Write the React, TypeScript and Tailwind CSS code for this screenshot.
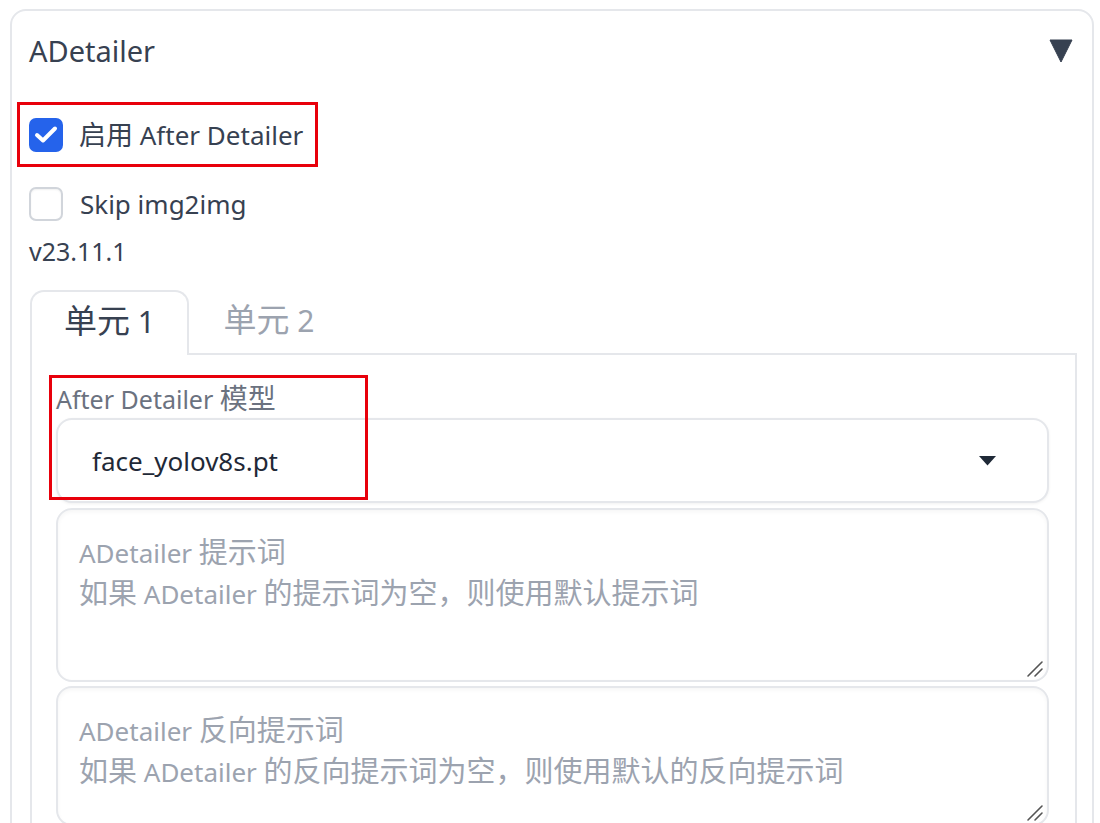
import React from "react";

const CJK_RE = /([\u3000-\u303f\u4e00-\u9fff\uff00-\uffef]+)/;

function Mixed({ text, cjk }: { text: string; cjk: string }) {
  const parts = text.split(CJK_RE);
  return (
    <>
      {parts.map((p, i) =>
        CJK_RE.test(p) ? (
          <span key={i} className={cjk}>
            {p}
          </span>
        ) : (
          <span key={i}>{p}</span>
        )
      )}
    </>
  );
}

function CheckedBox() {
  return (
    <div className="w-[34px] h-[34px] rounded-[7px] bg-[#2563eb] shrink-0">
      <svg width="34" height="34" viewBox="0 0 34 34">
        <path d="M8 17 L14 22.5 L26 10.5" fill="none" stroke="white" strokeWidth="4" strokeLinecap="round" strokeLinejoin="round" />
      </svg>
    </div>
  );
}

function EmptyBox() {
  return <div className="w-[34px] h-[34px] rounded-[7px] border-2 border-[#d1d5db] bg-white shadow-[inset_0_1px_2px_rgba(0,0,0,0.06)] shrink-0" />;
}

function Grip() {
  return (
    <svg className="absolute right-[3px] bottom-[2px]" width="18" height="18" viewBox="0 0 18 18">
      <path d="M2 16 L16 2 M9 16 L16 9" stroke="#555" strokeWidth="1.6" strokeLinecap="round" />
    </svg>
  );
}

function PromptBox({ h, title, desc }: { h: string; title: string; desc: string }) {
  return (
    <div className={`relative ${h} rounded-[16px] border-2 border-[#e5e7eb] bg-white pl-[21px] pt-[22px] text-[26px] leading-[40px] text-[#9ca3af] shadow-[inset_0_2px_4px_rgba(0,0,0,0.04)]`}>
      <div className="whitespace-nowrap">
        <Mixed text={title} cjk="text-[29px]" />
      </div>
      <div className="whitespace-nowrap">
        <Mixed text={desc} cjk="text-[29px]" />
      </div>
      <Grip />
    </div>
  );
}

export default function App() {
  return (
    <div className="w-[1100px] h-[823px] overflow-hidden bg-white pt-[9px] pl-[10px] font-['Noto_Sans','Noto_Sans_CJK_SC',sans-serif] text-[#374151]">
      <div className="w-[1084px] h-[840px] border-2 border-[#e5e7eb] rounded-[16px] pl-[17px] pr-[15px]">
        {/* header */}
        <div className="h-[80px] flex items-center justify-between">
          <span className="text-[29px] leading-[36px]">ADetailer</span>
          <svg className="mr-[4px]" width="24" height="24" viewBox="0 0 24 24">
            <path d="M1 1 L23 1 L12 23 Z" fill="#374151" stroke="#374151" strokeWidth="1" strokeLinejoin="round" />
          </svg>
        </div>

        {/* enable */}
        <div className="relative mt-[19px] h-[50px] flex items-center gap-[16px]">
          <CheckedBox />
          <span className="text-[26px] leading-[36px] whitespace-nowrap">
            <Mixed text="启用 After Detailer" cjk="text-[27px]" />
          </span>
          <div className="absolute left-[-12px] top-[-8px] w-[301px] h-[65px] border-[3px] border-[#e8000b] pointer-events-none" />
        </div>

        {/* skip */}
        <div className="mt-[19px] h-[50px] flex items-center gap-[17px]">
          <EmptyBox />
          <span className="text-[26px] leading-[36px]">Skip img2img</span>
        </div>

        <div className="mt-[4px] h-[36px] text-[25px] leading-[36px]">v23.11.1</div>

        {/* tabs */}
        <div className="mt-[21px] ml-[1px] flex">
          <div className="relative z-10 w-[159px] h-[65px] border-2 border-b-0 border-[#e5e7eb] rounded-t-[14px] bg-white flex items-center justify-center pb-[4px]">
            <span className="text-[30px] leading-[40px] text-[#374151] whitespace-nowrap">
              <Mixed text="单元 1" cjk="text-[33px]" />
            </span>
          </div>
          <div className="w-[160px] h-[65px] flex items-center justify-center pb-[4px]">
            <span className="text-[30px] leading-[40px] text-[#9ca3af] whitespace-nowrap">
              <Mixed text="单元 2" cjk="text-[33px]" />
            </span>
          </div>
        </div>

        {/* panel */}
        <div className="-mt-[2px] ml-[1px] h-[600px] border-2 border-[#e5e7eb] border-b-0 pl-[24px] pr-[26px] pt-[25px]">
          <div className="relative">
            <div className="h-[36px] text-[25px] leading-[36px] text-[#6b7280] whitespace-nowrap">
              <Mixed text="After Detailer 模型" cjk="text-[28px]" />
            </div>
            <div className="mt-[2px] h-[85px] rounded-[16px] border-2 border-[#e5e7eb] bg-white shadow-[0_1px_3px_rgba(0,0,0,0.06)] flex items-center justify-between pl-[34px] pr-[51px]">
              <span className="text-[26px] leading-[36px] text-[#1f2937]">face_yolov8s.pt</span>
              <svg width="17" height="10" viewBox="0 0 17 10">
                <path d="M0 0 L17 0 L8.5 9.5 Z" fill="#1f2937" />
              </svg>
            </div>
            <div className="absolute left-[-7px] top-[-5px] w-[319px] h-[125px] border-[3px] border-[#e8000b] pointer-events-none" />
          </div>

          <div className="mt-[5px]">
            <PromptBox h="h-[174px]" title="ADetailer 提示词" desc="如果 ADetailer 的提示词为空，则使用默认提示词" />
          </div>
          <div className="mt-[4px]">
            <PromptBox h="h-[140px]" title="ADetailer 反向提示词" desc="如果 ADetailer 的反向提示词为空，则使用默认的反向提示词" />
          </div>
        </div>
      </div>
    </div>
  );
}
